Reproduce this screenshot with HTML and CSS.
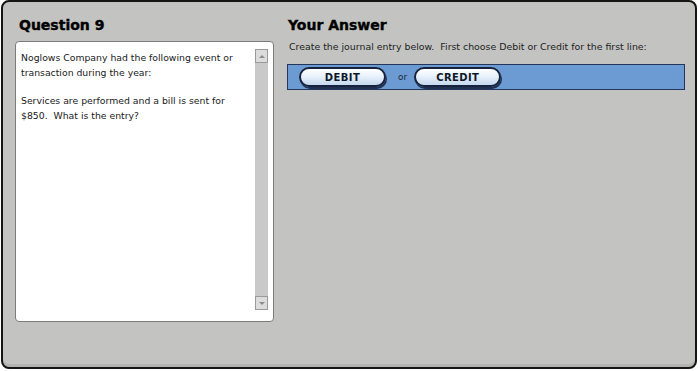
FILE: index.html
```html
<!DOCTYPE html>
<html lang="en">
<head>
  <meta charset="UTF-8" />
  <title>Question 9</title>
  <link rel="stylesheet" href="styles.css">
</head>
<body>
  <div class="panel">
    <div class="question-col">
      <h2>Question 9</h2>
      <div class="question-box">
        <div class="question-text">
          <p>Noglows Company had the following event or transaction during the year:</p>
          <p>Services are performed and a bill is sent for $850.&nbsp; What is the entry?</p>
        </div>
        <div class="scrollbar">
          <div class="scroll-btn up"></div>
          <div class="scroll-track"></div>
          <div class="scroll-btn down"></div>
        </div>
      </div>
    </div>

    <div class="answer-col">
      <h2>Your Answer</h2>
      <p class="hint">Create the journal entry below.&nbsp; First choose Debit or Credit for the first line:</p>
      <div class="choice-bar">
        <button class="choice-btn">DEBIT</button>
        <span class="or">or</span>
        <button class="choice-btn">CREDIT</button>
      </div>
    </div>
  </div>
</body>
</html>
```

FILE: styles.css
```css
body {
  margin: 0;
  background: #ffffff;
  font-family: "DejaVu Sans", Verdana, sans-serif;
  color: #111;
}

.panel {
  margin-left: 1px;
  width: 696px;
  height: 369px;
  box-sizing: border-box;
  border: 2px solid #151515;
  border-radius: 8px;
  background: #c3c4c1;
  box-shadow: inset 0 -3px 0 #b3b4b1;
  padding: 0 0 0 12px;
  display: flex;
  gap: 13px;
}

h2 {
  margin: 0;
  font-size: 14px;
  line-height: 18px;
  font-weight: bold;
  color: #000;
  -webkit-text-stroke: 0.4px #000;
}

.question-col {
  width: 259px;
  padding-top: 14px;
}

.question-col h2 {
  padding-left: 4px;
}

.question-box {
  margin-top: 7px;
  height: 281px;
  box-sizing: border-box;
  border: 1px solid #7c7c7c;
  border-radius: 4px;
  background: #fff;
  display: flex;
}

.question-text {
  flex: 1;
  padding: 8px 0 0 5px;
  font-size: 9.3px;
  line-height: 15px;
  color: #1a1a1a;
}

.question-text p {
  margin: 0 0 13px;
}

.scrollbar {
  width: 13px;
  margin: 7px 5px 11px 0;
  display: flex;
  flex-direction: column;
  background: #c9c9c9;
}

.scroll-track {
  flex: 1;
}

.scroll-btn {
  height: 14px;
  box-sizing: border-box;
  border: 1px solid #9a9a9a;
  background: #dcdcdc;
  display: flex;
  align-items: center;
  justify-content: center;
}

.scroll-btn::after {
  content: "";
  border-left: 3px solid transparent;
  border-right: 3px solid transparent;
}

.scroll-btn.up::after {
  border-bottom: 3px solid #8a8a8a;
}

.scroll-btn.down::after {
  border-top: 3px solid #8a8a8a;
}

.answer-col {
  width: 398px;
  padding-top: 14px;
}

.answer-col h2 {
  padding-left: 1px;
}

.hint {
  margin: 7px 0 0 2px;
  font-size: 9.4px;
  line-height: 12px;
  color: #222;
}

.choice-bar {
  margin-top: 11px;
  height: 26px;
  box-sizing: border-box;
  border: 1px solid #24365c;
  background: #6b9bd2;
  display: flex;
  align-items: center;
  padding-left: 11px;
}

.choice-btn {
  width: 87px;
  height: 20px;
  border: 2px solid #17233d;
  border-radius: 10px;
  background: linear-gradient(#ffffff, #e6f0fa 50%, #c4d8ee);
  box-shadow: 1px 2px 0 #203050;
  font-family: "DejaVu Sans", Verdana, sans-serif;
  font-weight: bold;
  font-size: 10px;
  letter-spacing: 0.4px;
  color: #101828;
  padding: 0;
  cursor: pointer;
}

.or {
  margin: 0 7px 0 12px;
  font-size: 9px;
  color: #1d2a40;
}
```
